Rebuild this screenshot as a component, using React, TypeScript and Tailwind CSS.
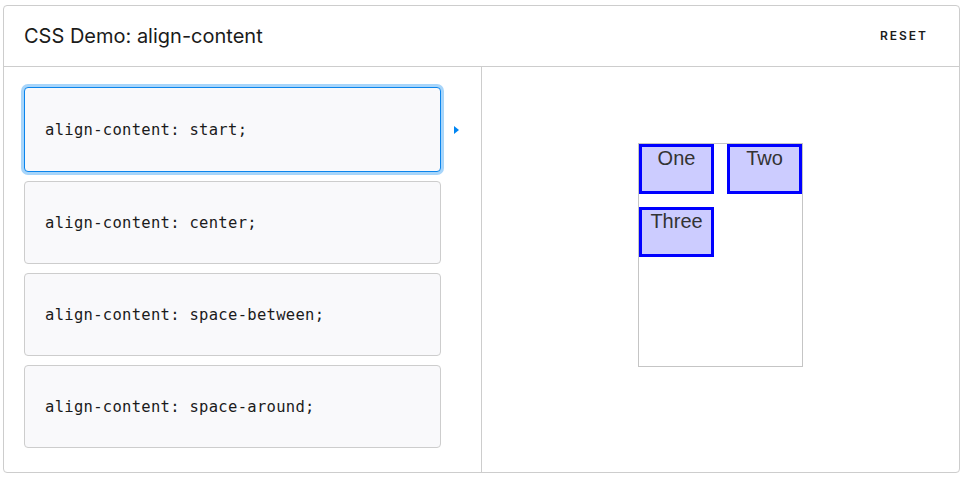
import React from "react";

const options = [
  "align-content: start;",
  "align-content: center;",
  "align-content: space-between;",
  "align-content: space-around;",
];

export default function App() {
  return (
    <div className="w-[973px] h-[481px] bg-white pt-[5px] pl-[3px]">
      <div className="w-[957px] h-[468px] border border-[#cdcdcd] rounded-[4px] flex flex-col bg-white">
        <div className="h-[61px] shrink-0 border-b border-[#cdcdcd] flex items-center justify-between pl-5 pr-[31px]">
          <h1 className="text-[20px] font-normal text-[#1b1b1b] [font-family:Inter,'Noto_Sans',sans-serif]">
            CSS Demo: align-content
          </h1>
          <button className="text-[12px] font-semibold tracking-[2px] text-[#1b1b1b] [font-family:Inter,'Noto_Sans',sans-serif]">
            RESET
          </button>
        </div>
        <div className="flex flex-1 min-h-0">
          <div className="w-[478px] shrink-0 border-r border-[#cdcdcd] pl-5 pt-5 flex flex-col gap-[9px]">
            {options.map((o, i) => (
              <div key={o} className="flex items-center">
                <div
                  className={
                    i === 0
                      ? "w-[417px] h-[85px] rounded-[4px] border border-[#0b85ec] shadow-[0_0_0_3px_#a7d5fa] bg-[#f9f9fb] flex items-center pl-5 pt-[2px]"
                      : "w-[417px] h-[83px] rounded-[4px] border border-[#cdcdcd] bg-[#f9f9fb] flex items-center pl-5 pt-[2px]"
                  }
                >
                  <code className="text-[15.5px] text-[#1b1b1b] [font-family:'DejaVu_Sans_Mono',monospace] tracking-[0.3px]">
                    {o}
                  </code>
                </div>
                {i === 0 && (
                  <div className="ml-[13px] w-0 h-0 border-y-[4.5px] border-y-transparent border-l-[5px] border-l-[#0085f2]" />
                )}
              </div>
            ))}
          </div>
          <div className="flex-1 flex justify-center pt-[76px]">
            <div className="w-[165px] h-[224px] border border-[#c5c5c5] grid grid-cols-[75px_75px] gap-x-[13px] gap-y-[13px] auto-rows-[50px] content-start [font-family:'Liberation_Sans',Arial,sans-serif]">
              {["One", "Two", "Three"].map((t) => (
                <div
                  key={t}
                  className="border-[3px] border-[#0000ff] bg-[#ccccff] text-center text-[20px] leading-[23px] text-[#333333]"
                >
                  {t}
                </div>
              ))}
            </div>
          </div>
        </div>
      </div>
    </div>
  );
}
